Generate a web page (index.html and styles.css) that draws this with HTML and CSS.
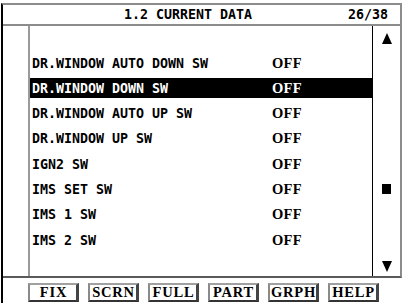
FILE: index.html
```html
<!DOCTYPE html>
<html lang="en">
<head>
    <meta charset="UTF-8">
    <meta name="viewport" content="width=device-width, initial-scale=1.0">
    <title>1.2 Current Data</title>
    <link rel="stylesheet" href="styles.css">
</head>
<body>

    <div class="screen">

        <!-- Title bar -->
        <div class="header">
            <span class="title">1.2 CURRENT DATA</span>
            <span class="page">26/38</span>
        </div>

        <!-- Data list with scroll column -->
        <div class="main">
            <div class="gutter"></div>
            <div class="list">
                <div class="row"><span class="label">DR.WINDOW AUTO DOWN SW</span><span class="value">OFF</span></div>
                <div class="row selected"><span class="label">DR.WINDOW DOWN SW</span><span class="value">OFF</span></div>
                <div class="row"><span class="label">DR.WINDOW AUTO UP SW</span><span class="value">OFF</span></div>
                <div class="row"><span class="label">DR.WINDOW UP SW</span><span class="value">OFF</span></div>
                <div class="row"><span class="label">IGN2 SW</span><span class="value">OFF</span></div>
                <div class="row"><span class="label">IMS SET SW</span><span class="value">OFF</span></div>
                <div class="row"><span class="label">IMS 1 SW</span><span class="value">OFF</span></div>
                <div class="row"><span class="label">IMS 2 SW</span><span class="value">OFF</span></div>
            </div>
            <div class="scroll">
                <svg class="arrow up" width="10" height="11" viewBox="0 0 10 11"><polygon points="5,0 10,11 0,11" fill="#000"/></svg>
                <div class="thumb"></div>
                <svg class="arrow down" width="10" height="11" viewBox="0 0 10 11"><polygon points="0,0 10,0 5,11" fill="#000"/></svg>
            </div>
        </div>

        <!-- Soft keys -->
        <div class="buttons">
            <div class="key">FIX</div>
            <div class="key">SCRN</div>
            <div class="key">FULL</div>
            <div class="key">PART</div>
            <div class="key">GRPH</div>
            <div class="key">HELP</div>
        </div>

    </div>

</body>
</html>
```

FILE: styles.css
```css
body {
    background-color: white;
    margin: 0;
    padding: 0;
    font-family: 'DejaVu Sans Mono', monospace;
    font-size: 13.3px;
    font-weight: bold;
    color: black;
}

.screen {
    width: 401px;
    height: 300px;
    margin: 3px 0 0 1px;
    border-left: 2px solid #000;
    border-top: 2px solid #8c8c8c;
    box-sizing: border-box;
    display: flex;
    flex-direction: column;
}

.header {
    height: 21px;
    display: flex;
    align-items: center;
    justify-content: space-between;
    padding: 0 12px 0 121px;
    border-bottom: 2px solid #8c8c8c;
    border-right: 2px solid #8c8c8c;
    box-sizing: border-box;
    white-space: pre;
}

.main {
    height: 252px;
    display: flex;
    border-bottom: 2px solid #5a5a5a;
    border-right: 2px solid #8c8c8c;
    box-sizing: border-box;
}

.gutter {
    width: 25px;
    border-right: 2px solid #9a9a9a;
}

.list {
    width: 342px;
    border-right: 1px solid #000;
    padding-top: 27px;
    display: flex;
    flex-direction: column;
    gap: 5.3px;
}

.row {
    height: 20px;
    display: flex;
    align-items: center;
    padding-left: 2px;
    white-space: pre;
}

.row.selected {
    background-color: black;
    color: white;
}

.label {
    width: 240px;
}

.value {
    font-family: 'Liberation Serif', serif;
    font-size: 14.5px;
    letter-spacing: 0.3px;
}

.scroll {
    flex: 1;
    display: flex;
    flex-direction: column;
    align-items: center;
}

.arrow.up {
    margin-top: 7px;
}

.thumb {
    width: 9px;
    height: 10px;
    background-color: black;
    margin-top: 140px;
}

.arrow.down {
    margin-top: auto;
    margin-bottom: 4px;
}

.buttons {
    display: flex;
    gap: 9px;
    padding: 5px 0 0 25px;
}

.key {
    width: 51px;
    height: 19px;
    box-sizing: border-box;
    border-style: solid;
    border-width: 2px 3px 2px 2px;
    border-color: #a0a0a0 #444 #333 #8a8a8a;
    font-family: 'Liberation Serif', serif;
    font-size: 14.5px;
    letter-spacing: 0.8px;
    display: flex;
    align-items: center;
    justify-content: center;
    padding-left: 1px;
}
```
